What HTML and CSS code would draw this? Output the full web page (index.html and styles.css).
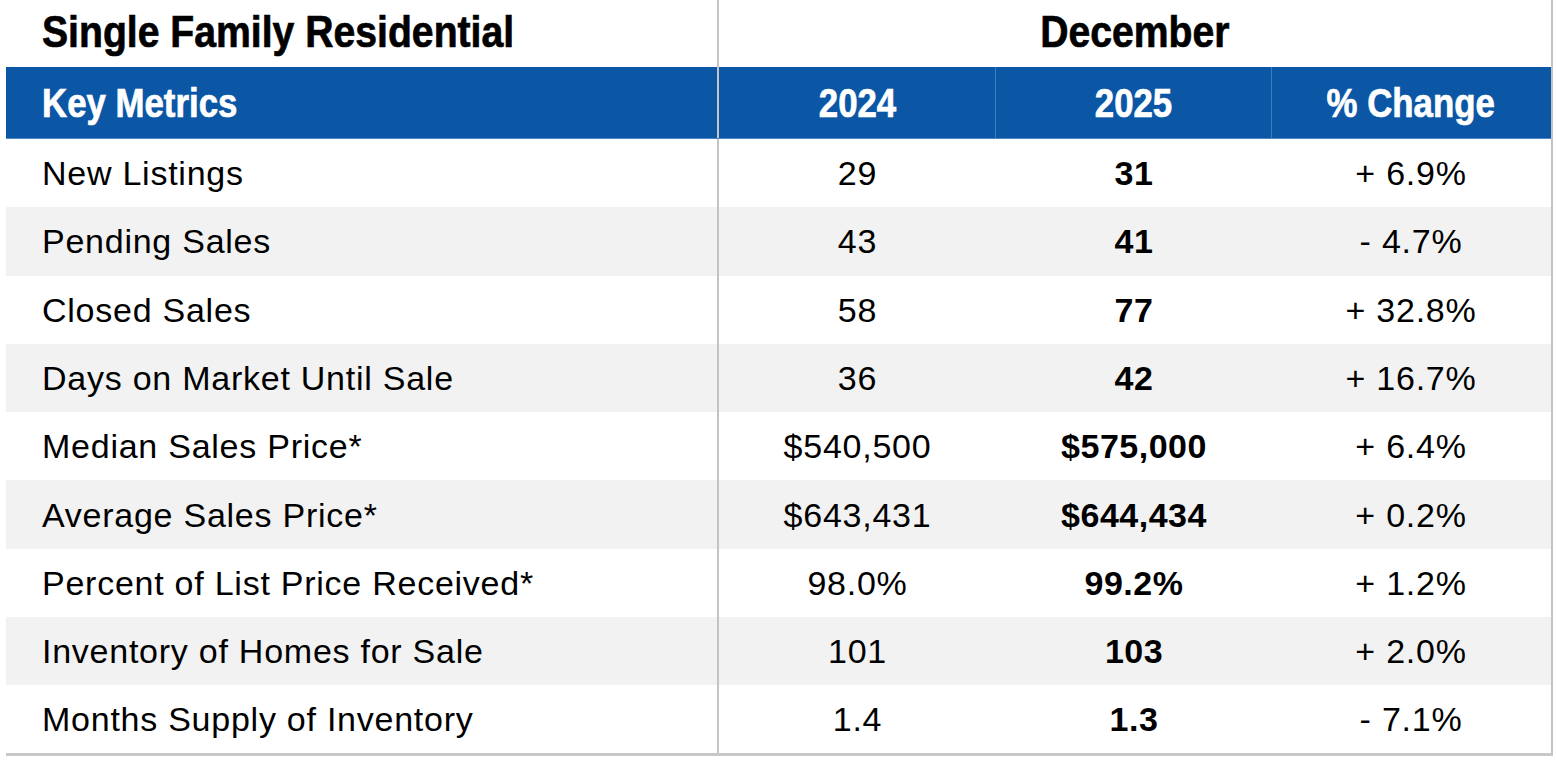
FILE: index.html
```html
<!DOCTYPE html>
<html>
<head>
<meta charset="utf-8">
<link rel="stylesheet" href="styles.css">
</head>
<body>
<div class="table">
  <div class="row title-row">
    <div class="cell first"><span class="title left">Single Family Residential</span></div>
    <div class="cell span3"><span class="title">December</span></div>
  </div>
  <div class="row head-row">
    <div class="cell first"><span class="head left">Key Metrics</span></div>
    <div class="cell c hd"><span class="head">2024</span></div>
    <div class="cell c hd"><span class="head">2025</span></div>
    <div class="cell c"><span class="head">% Change</span></div>
  </div>
  <div class="row">
    <div class="cell first">New Listings</div>
    <div class="cell c">29</div>
    <div class="cell c b">31</div>
    <div class="cell c">+ 6.9%</div>
  </div>
  <div class="row alt">
    <div class="cell first">Pending Sales</div>
    <div class="cell c">43</div>
    <div class="cell c b">41</div>
    <div class="cell c">- 4.7%</div>
  </div>
  <div class="row">
    <div class="cell first">Closed Sales</div>
    <div class="cell c">58</div>
    <div class="cell c b">77</div>
    <div class="cell c">+ 32.8%</div>
  </div>
  <div class="row alt">
    <div class="cell first">Days on Market Until Sale</div>
    <div class="cell c">36</div>
    <div class="cell c b">42</div>
    <div class="cell c">+ 16.7%</div>
  </div>
  <div class="row">
    <div class="cell first">Median Sales Price*</div>
    <div class="cell c">$540,500</div>
    <div class="cell c b">$575,000</div>
    <div class="cell c">+ 6.4%</div>
  </div>
  <div class="row alt">
    <div class="cell first">Average Sales Price*</div>
    <div class="cell c">$643,431</div>
    <div class="cell c b">$644,434</div>
    <div class="cell c">+ 0.2%</div>
  </div>
  <div class="row">
    <div class="cell first">Percent of List Price Received*</div>
    <div class="cell c">98.0%</div>
    <div class="cell c b">99.2%</div>
    <div class="cell c">+ 1.2%</div>
  </div>
  <div class="row alt">
    <div class="cell first">Inventory of Homes for Sale</div>
    <div class="cell c">101</div>
    <div class="cell c b">103</div>
    <div class="cell c">+ 2.0%</div>
  </div>
  <div class="row last">
    <div class="cell first">Months Supply of Inventory</div>
    <div class="cell c">1.4</div>
    <div class="cell c b">1.3</div>
    <div class="cell c">- 7.1%</div>
  </div>
</div>
</body>
</html>
```
FILE: styles.css
```css
html, body {
  margin: 0;
  padding: 0;
  background: #ffffff;
}

.table {
  margin-left: 6px;
  width: 1545px;
  border-right: 2px solid #c4c4c4;
  font-family: "Liberation Sans", Arial, sans-serif;
  color: #000;
}

.row {
  display: grid;
  grid-template-columns: 713px 277px 276px 278px;
  height: 68.3px;
  font-size: 34px;
  letter-spacing: 0.75px;
}

.cell {
  display: flex;
  align-items: center;
  padding-top: 1px;
}

.cell.first {
  padding-left: 36px;
  border-right: 2px solid #c4c4c4;
}

.cell.c {
  justify-content: center;
}

.cell.b {
  font-weight: bold;
  letter-spacing: 0.5px;
}

.alt {
  background: #f2f2f2;
}

.last {
  border-bottom: 3px solid #c8c8c8;
  height: 68px;
}

.title-row {
  height: 67px;
  background: #fff;
}

.title-row .cell {
  padding-top: 0;
  padding-bottom: 4px;
}

.span3 {
  grid-column: 2 / 5;
  justify-content: center;
}

.title, .head {
  font-family: "Liberation Sans", Arial, sans-serif;
  font-weight: bold;
  display: inline-block;
  white-space: nowrap;
  transform: scaleX(0.87);
  transform-origin: center center;
  letter-spacing: 0;
  -webkit-text-stroke: 0.7px currentColor;
}

.title.left, .head.left {
  transform-origin: left center;
}

.title {
  font-size: 45px;
}

.head-row {
  height: 71px;
  background: #0c57a5;
  color: #fff;
  border-bottom: 1px solid #4c86c4;
}

.head-row .cell {
  padding-top: 2px;
}

.head {
  font-size: 40px;
}

.head-row .hd {
  border-right: 1px solid #3f7cbf;
}
```
